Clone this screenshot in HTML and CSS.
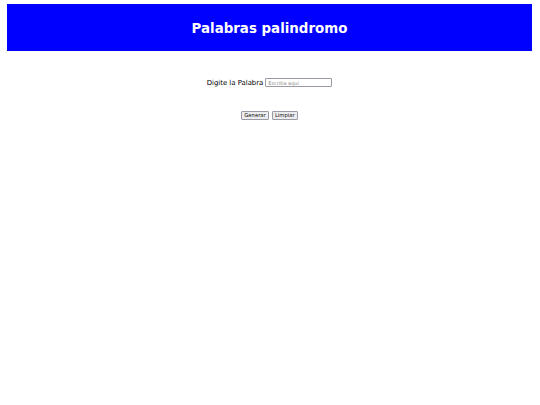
FILE: index.html
```html
<!DOCTYPE html>
<html lang="es">
<head>
<meta charset="utf-8">
<title>Palabras palindromo</title>
<link rel="stylesheet" href="styles.css">
</head>
<body>
<header class="banner">
  <h1 class="title">Palabras palindromo</h1>
</header>
<main class="form">
  <div class="row">
    <label class="label" for="palabra">Digite la Palabra</label>
    <input class="field" id="palabra" type="text" placeholder="Escriba aqui">
  </div>
  <div class="actions">
    <button class="btn" type="button">Generar</button>
    <button class="btn" type="button">Limpiar</button>
  </div>
</main>
</body>
</html>
```
FILE: styles.css
```css
html, body {
  margin: 0;
  padding: 0;
  background: #ffffff;
}
body {
  padding: 4px 8px 0 7px;
  font-family: "DejaVu Sans", sans-serif;
  color: #000;
}
.banner {
  background: #0000ff;
  height: 47px;
  display: flex;
  align-items: center;
  justify-content: center;
}
.title {
  margin: 1px 0 0 0;
  color: #ffffff;
  font-size: 13.4px;
  font-weight: bold;
}
.form {
  display: flex;
  flex-direction: column;
  align-items: center;
}
.row {
  margin-top: 27px;
  display: flex;
  align-items: center;
  gap: 2px;
}
.label {
  font-size: 6.9px;
  color: #000;
}
.field {
  width: 67px;
  height: 9px;
  box-sizing: border-box;
  font-family: "DejaVu Sans", sans-serif;
  font-size: 5px;
  padding: 0 2px;
  border: 1px solid #9a9aa4;
  border-radius: 1px;
  background: #fff;
}
.field::placeholder {
  color: #8a8a8a;
}
.actions {
  margin-top: 24px;
  display: flex;
  gap: 3px;
}
.btn {
  font-family: "DejaVu Sans", sans-serif;
  font-size: 5.3px;
  height: 9px;
  min-width: 26px;
  padding: 0 2px;
  line-height: 1;
  border: 1px solid #9a9aa4;
  border-radius: 1px;
  background: #ececee;
  color: #111;
}
```
